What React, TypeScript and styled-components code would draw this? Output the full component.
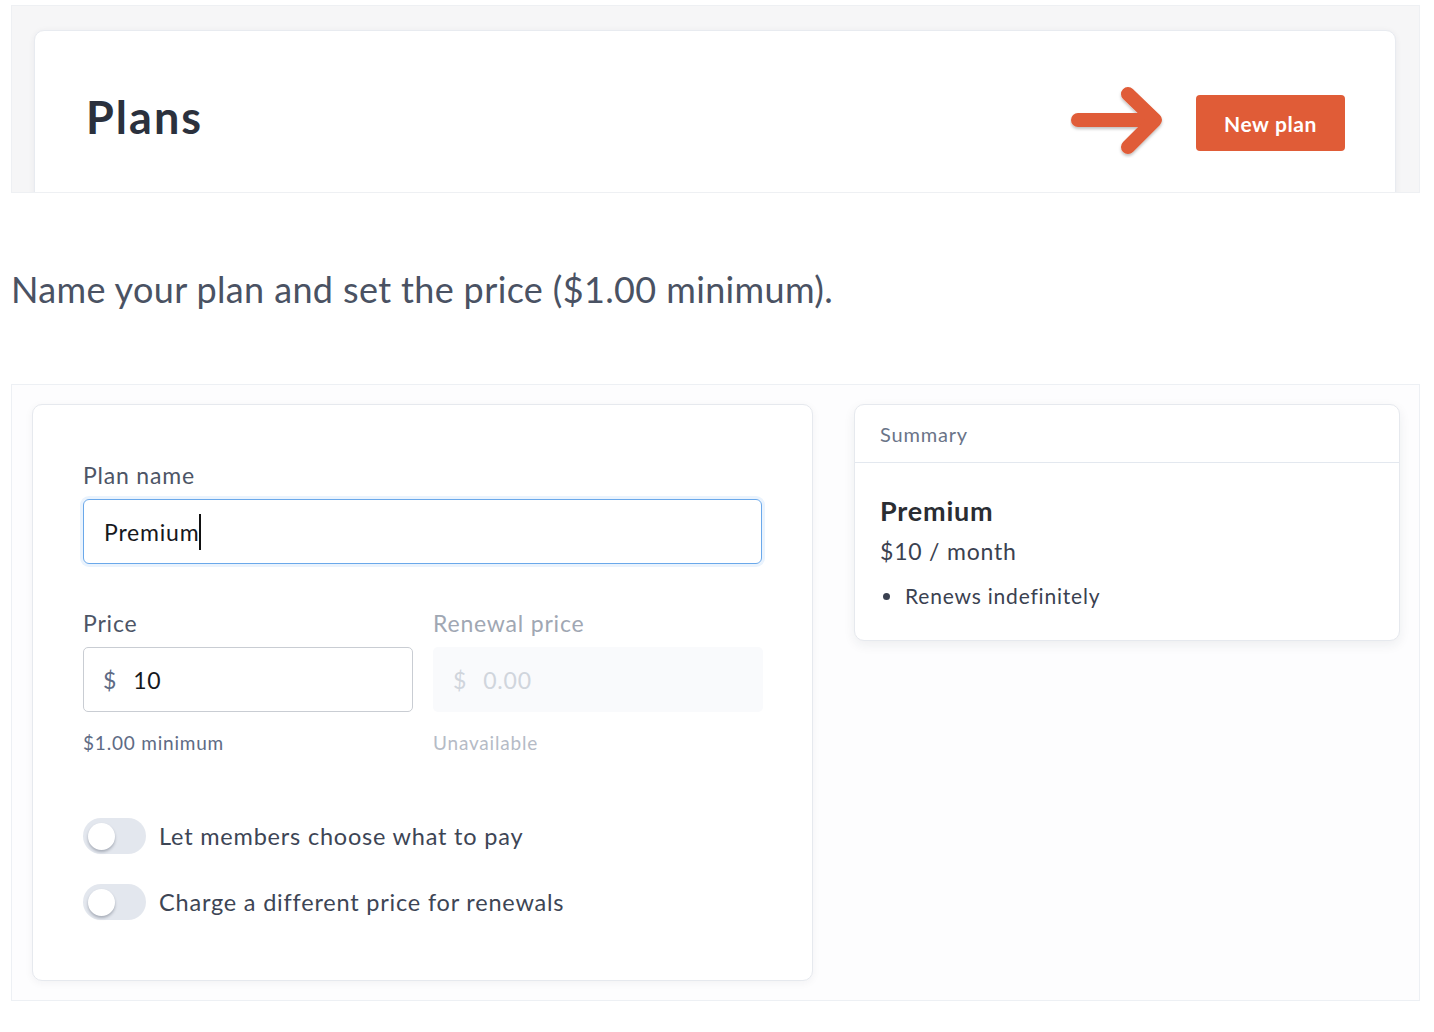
import React from 'react'
import styled, { createGlobalStyle } from 'styled-components'

const Colors = {
  Orange: '#e05c37',
  Heading: '#2b313d',
  Text: '#4a5263',
  Label: '#4d5566',
  Muted: '#5e6b85',
  Faint: '#aab1bd',
  Line: '#e9edf2',
}

const GlobalStyle = createGlobalStyle`
  body {
    margin: 0;
    background: #ffffff;
    font-family: Lato, "Open Sans", sans-serif;
    color: ${Colors.Text};
  }
`

function Arrow() {
  return (
    <svg width="100" height="74" viewBox="0 0 100 74">
      <defs>
        <filter id="arrowShadow" x="-20%" y="-20%" width="140%" height="140%">
          <feDropShadow dx="0" dy="2" stdDeviation="1.5" floodColor="#000" floodOpacity="0.25" />
        </filter>
      </defs>
      <g
        filter="url(#arrowShadow)"
        fill="none"
        stroke={Colors.Orange}
        strokeWidth="14"
        strokeLinecap="round"
        strokeLinejoin="round"
      >
        <path d="M8 34 H84" />
        <path d="M58 8 L85 34 L58 61" />
      </g>
    </svg>
  )
}

function Toggle({ label }: { label: string }) {
  return (
    <ToggleRow>
      <Track>
        <Knob />
      </Track>
      <span>{label}</span>
    </ToggleRow>
  )
}

export default function App() {
  return (
    <Page>
      <GlobalStyle />
      <Shot>
        <HeaderCard>
          <Title>Plans</Title>
          <HeaderActions>
            <Arrow />
            <NewPlanBtn>New plan</NewPlanBtn>
          </HeaderActions>
        </HeaderCard>
      </Shot>

      <Intro>Name your plan and set the price ($1.00 minimum).</Intro>

      <FormShot>
        <FormCard>
          <Field>
            <Label>Plan name</Label>
            <NameInput>
              Premium<Caret />
            </NameInput>
          </Field>

          <PriceGrid>
            <Field>
              <Label>Price</Label>
              <MoneyInput>
                <Currency>$</Currency>
                <span>10</span>
              </MoneyInput>
              <Hint>$1.00 minimum</Hint>
            </Field>
            <Field>
              <Label $disabled>Renewal price</Label>
              <MoneyInput $disabled>
                <Currency $disabled>$</Currency>
                <span>0.00</span>
              </MoneyInput>
              <Hint $disabled>Unavailable</Hint>
            </Field>
          </PriceGrid>

          <Toggles>
            <Toggle label="Let members choose what to pay" />
            <Toggle label="Charge a different price for renewals" />
          </Toggles>
        </FormCard>

        <SummaryCard>
          <SummaryHead>Summary</SummaryHead>
          <SummaryBody>
            <SummaryName>Premium</SummaryName>
            <SummaryPrice>$10 / month</SummaryPrice>
            <SummaryItem>Renews indefinitely</SummaryItem>
          </SummaryBody>
        </SummaryCard>
      </FormShot>
    </Page>
  )
}

const Page = styled.div`
  padding: 5px 14px 0 11px;
  letter-spacing: 0.05em;
`

const Shot = styled.div`
  background: #f6f6f7;
  border: 1px solid #eef0f3;
  padding: 24px 23px 0 22px;
  height: 188px;
  box-sizing: border-box;
  overflow: hidden;
`

const HeaderCard = styled.div`
  height: 180px;
  background: #fff;
  border: 1px solid #e8ebf0;
  border-radius: 10px;
  box-shadow: 0 1px 6px rgba(30, 40, 60, 0.06);
  display: flex;
  align-items: flex-start;
  justify-content: space-between;
  padding: 57px 50px 0 51px;
  box-sizing: border-box;
`

const Title = styled.h1`
  margin: 0;
  font-size: 45px;
  line-height: 58px;
  font-weight: 700;
  color: ${Colors.Heading};
  letter-spacing: 0.045em;
`

const HeaderActions = styled.div`
  display: flex;
  align-items: center;
  gap: 26px;
  margin-top: -2px;
`

const NewPlanBtn = styled.button`
  width: 149px;
  height: 56px;
  border: none;
  border-radius: 4px;
  background: ${Colors.Orange};
  color: #fff;
  font-family: inherit;
  font-size: 21px;
  font-weight: 700;
  letter-spacing: 0.03em;
  cursor: pointer;
`

const Intro = styled.p`
  margin: 74px 0 73px;
  font-size: 36px;
  line-height: 44px;
  letter-spacing: 0.01em;
  color: ${Colors.Text};
`

const FormShot = styled.div`
  background: #fdfdfe;
  border: 1.5px solid #edf0f4;
  padding: 19px 19px 19px 20px;
  display: flex;
  align-items: flex-start;
  gap: 41px;
`

const FormCard = styled.div`
  width: 781px;
  box-sizing: border-box;
  background: #fff;
  border: 1px solid #e6e9ee;
  border-radius: 10px;
  box-shadow: 0 2px 8px rgba(30, 40, 60, 0.05);
  padding: 56px 50px 60px 50px;
`

const Field = styled.div`
  display: flex;
  flex-direction: column;
`

const Label = styled.label<{ $disabled?: boolean }>`
  font-size: 23px;
  line-height: 28px;
  margin-bottom: 10px;
  color: ${(p) => (p.$disabled ? '#a0a7b3' : Colors.Label)};
`

const NameInput = styled.div`
  height: 65px;
  box-sizing: border-box;
  border: 1.5px solid #6aa8ea;
  border-radius: 6px;
  box-shadow: 0 0 0 3px #eaf3fd;
  padding: 0 20px;
  display: flex;
  align-items: center;
  font-size: 23px;
  color: #16181d;
`

const Caret = styled.span`
  display: inline-block;
  width: 2px;
  height: 36px;
  background: #111;
`

const PriceGrid = styled.div`
  display: grid;
  grid-template-columns: 330px 330px;
  gap: 20px;
  margin-top: 45px;
`

const MoneyInput = styled.div<{ $disabled?: boolean }>`
  height: 65px;
  box-sizing: border-box;
  border: ${(p) => (p.$disabled ? '1.5px solid transparent' : '1.5px solid #c9cdd3')};
  background: ${(p) => (p.$disabled ? '#f9fafc' : '#fff')};
  border-radius: 5px;
  padding: 0 19px;
  display: flex;
  align-items: center;
  gap: 16px;
  font-size: 23px;
  color: ${(p) => (p.$disabled ? '#d0d5dc' : '#16181d')};
`

const Currency = styled.span<{ $disabled?: boolean }>`
  color: ${(p) => (p.$disabled ? '#d0d5dc' : Colors.Muted)};
`

const Hint = styled.div<{ $disabled?: boolean }>`
  margin-top: 19px;
  font-size: 19px;
  line-height: 24px;
  color: ${(p) => (p.$disabled ? '#b5bbc6' : Colors.Muted)};
`

const Toggles = styled.div`
  margin-top: 63px;
  display: flex;
  flex-direction: column;
  gap: 30px;
`

const ToggleRow = styled.div`
  display: flex;
  align-items: center;
  gap: 13px;
  font-size: 23.5px;
  color: #3d4555;
`

const Track = styled.div`
  width: 63px;
  height: 36px;
  border-radius: 18px;
  background: #e3e7ee;
  display: flex;
  align-items: center;
  padding-left: 5px;
  box-sizing: border-box;
  flex-shrink: 0;
`

const Knob = styled.div`
  width: 27px;
  height: 27px;
  border-radius: 50%;
  background: #fff;
  box-shadow: 0 2px 3px rgba(30, 40, 60, 0.3);
`

const SummaryCard = styled.div`
  width: 546px;
  box-sizing: border-box;
  background: #fff;
  border: 1px solid #e6e9ee;
  border-radius: 10px;
  box-shadow: 0 4px 12px rgba(30, 40, 60, 0.07);
`

const SummaryHead = styled.div`
  height: 58px;
  box-sizing: border-box;
  padding: 0 25px;
  display: flex;
  align-items: center;
  font-size: 20px;
  color: #6a7488;
  border-bottom: 1.5px solid #e3e8ef;
`

const SummaryBody = styled.div`
  padding: 31px 25px 31px;
`

const SummaryName = styled.div`
  font-size: 27px;
  line-height: 34px;
  font-weight: 700;
  color: #2a2d33;
`

const SummaryPrice = styled.div`
  margin-top: 8px;
  font-size: 23px;
  line-height: 30px;
  color: #3a4150;
`

const SummaryItem = styled.div`
  margin-top: 17px;
  display: flex;
  align-items: center;
  gap: 15px;
  font-size: 21px;
  line-height: 26px;
  color: #3a4150;

  &::before {
    content: '';
    width: 7px;
    height: 7px;
    border-radius: 50%;
    background: #3a4150;
    margin-left: 3px;
  }
`
